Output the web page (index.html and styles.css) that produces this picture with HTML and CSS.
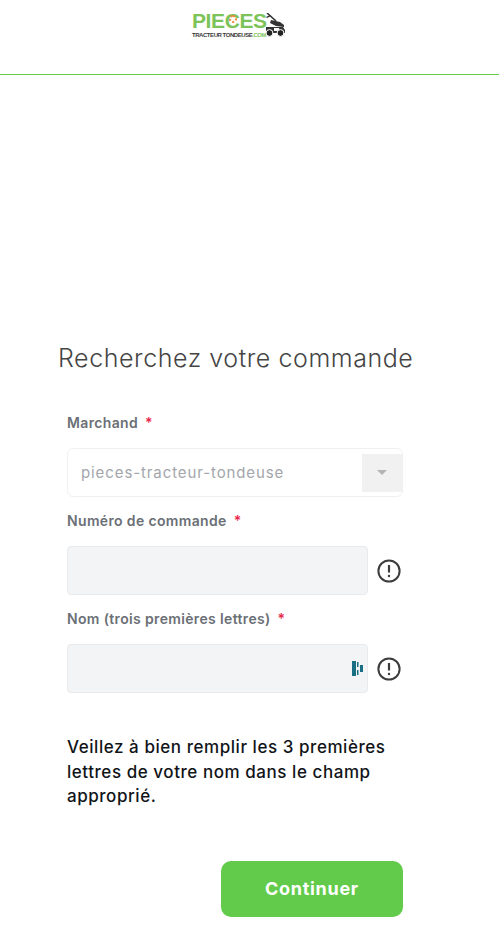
FILE: index.html
```html
<!DOCTYPE html>
<html lang="fr">
<head>
<meta charset="utf-8">
<title>Recherchez votre commande</title>
<link rel="stylesheet" href="styles.css">
</head>
<body>
<header class="header">
  <div class="logo">
    <div class="logo-text">
      <div class="logo-main">PIE<span class="logo-c">C<span class="logo-gear"></span></span>ES</div>
      <div class="logo-sub">TRACTEUR TONDEUSE<span class="logo-com">.COM</span></div>
    </div>
    <svg class="logo-mower" width="20" height="24" viewBox="0 0 20 24" aria-hidden="true">
      <path d="M2 0l9 8" stroke="#333" stroke-width="1.6" fill="none"/>
      <path d="M1 4l4-2 1 1-4 2z" fill="#333"/>
      <path d="M6 7l9 2 4 3v2l-8-1-6-3z" fill="#333"/>
      <path d="M1 14h17l2 3v3H1z" fill="#333"/>
      <path d="M9 15h5l1 3H9z" fill="#fff"/>
      <circle cx="4.5" cy="20" r="3.4" fill="#222" stroke="#fff"/>
      <circle cx="15.5" cy="20" r="3.4" fill="#222" stroke="#fff"/>
    </svg>
  </div>
</header>
<main class="main">
  <h1 class="title">Recherchez votre commande</h1>
  <form class="form">
    <div class="field">
      <label class="label">Marchand <span class="req">*</span></label>
      <div class="select">
        <span class="select-value">pieces-tracteur-tondeuse</span>
        <span class="select-arrow"><span class="caret"></span></span>
      </div>
    </div>
    <div class="field">
      <label class="label">Numéro de commande <span class="req">*</span></label>
      <div class="input-row">
        <div class="input"></div>
        <svg class="info" width="24" height="24" viewBox="0 0 24 24" aria-hidden="true">
          <circle cx="12" cy="12" r="10.6" fill="none" stroke="#3c3c3c" stroke-width="2"/>
          <path d="M12 6v7.5" stroke="#3c3c3c" stroke-width="2.2"/>
          <circle cx="12" cy="17" r="1.2" fill="#3c3c3c"/>
        </svg>
      </div>
    </div>
    <div class="field">
      <label class="label">Nom (trois premières lettres) <span class="req">*</span></label>
      <div class="input-row">
        <div class="input">
          <svg class="dash" width="11" height="15" viewBox="0 0 11 15" aria-hidden="true">
            <path d="M0 0h4v15H0z" fill="#1a6f85"/>
            <path d="M5 1h1.5v5H5zM5 9h1.5v5H5z" fill="#1a6f85"/>
            <path d="M8 4h3v7H8z" fill="#1a6f85"/>
          </svg>
        </div>
        <svg class="info" width="24" height="24" viewBox="0 0 24 24" aria-hidden="true">
          <circle cx="12" cy="12" r="10.6" fill="none" stroke="#3c3c3c" stroke-width="2"/>
          <path d="M12 6v7.5" stroke="#3c3c3c" stroke-width="2.2"/>
          <circle cx="12" cy="17" r="1.2" fill="#3c3c3c"/>
        </svg>
      </div>
    </div>
    <p class="note">Veillez à bien remplir les 3 premières lettres de votre nom dans le champ approprié.</p>
    <div class="actions">
      <button class="btn" type="button">Continuer</button>
    </div>
  </form>
</main>
</body>
</html>
```
FILE: styles.css
```css
* { box-sizing: border-box; }
html, body { margin: 0; padding: 0; }
body {
  background: #fff;
  font-family: "Inter", "Noto Sans", sans-serif;
  color: #3c3c3c;
  height: 944px;
  overflow: hidden;
}
.header {
  height: 75px;
  border-bottom: 1px solid #62cb4b;
  display: flex;
  justify-content: center;
  padding: 12px 0 0 0;
}
.logo { display: flex; align-items: flex-start; height: 26px; margin-left: -22px; }
.logo-text { display: flex; flex-direction: column; width: 75px; }
.logo-main {
  font-family: "Liberation Sans", sans-serif;
  font-weight: 700;
  font-size: 21px;
  line-height: 17px;
  letter-spacing: -0.4px;
  color: #7cc35a;
  white-space: nowrap;
}
.logo-c { position: relative; }
.logo-gear {
  position: absolute;
  left: 4px;
  top: 6px;
  width: 8px;
  height: 8px;
  border: 2px dotted #ee8a3c;
  border-radius: 50%;
}
.logo-sub {
  font-family: "Liberation Sans", sans-serif;
  font-weight: 700;
  font-size: 6px;
  line-height: 7px;
  letter-spacing: -0.45px;
  margin-top: 3px;
  color: #3b3b3b;
  white-space: nowrap;
}
.logo-com { color: #7cc35a; }
.logo-mower { margin: 1px 0 0 -2px; }
.main { padding: 0 0 0 58px; }
.title {
  margin: 268px 0 0 0;
  font-weight: 300;
  font-size: 25px;
  line-height: 30px;
  letter-spacing: 0.56px;
  color: #454545;
  white-space: nowrap;
}
.form { width: 345px; padding-left: 9px; margin-top: 40px; }
.field { height: 98px; }
.label {
  display: block;
  font-size: 14px;
  font-weight: 600;
  line-height: 20px;
  letter-spacing: 0.35px;
  color: #6b6f76;
  height: 35px;
}
.req { color: #e8274b; margin-left: 3px; }
.select {
  width: 336px;
  height: 49px;
  border: 1px solid #eff0f1;
  border-radius: 6px;
  display: flex;
  align-items: center;
  justify-content: space-between;
  padding-left: 13px;
}
.select-value { font-size: 15px; color: #a3a6ab; letter-spacing: 0.9px; }
.select-arrow {
  width: 40px;
  height: 38px;
  background: #f1f1f1;
  display: flex;
  align-items: center;
  justify-content: center;
}
.caret {
  width: 0;
  height: 0;
  border-left: 5px solid transparent;
  border-right: 5px solid transparent;
  border-top: 5px solid #b4b4b4;
}
.input-row { display: flex; align-items: center; gap: 9px; }
.input {
  width: 301px;
  height: 49px;
  background: #f3f4f6;
  border: 1px solid #e9eaec;
  border-radius: 4px;
  display: flex;
  align-items: center;
  justify-content: flex-end;
  padding-right: 4px;
}
.note {
  margin: 0;
  padding-top: 28px;
  font-size: 17px;
  font-weight: 500;
  line-height: 24.5px;
  letter-spacing: 0.55px;
  color: #111418;
  width: 336px;
}
.actions { display: flex; justify-content: flex-end; width: 336px; margin-top: 52px; }
.btn {
  width: 182px;
  height: 56px;
  border: 0;
  border-radius: 10px;
  background: #62cb4b;
  color: #fff;
  font-family: inherit;
  font-size: 18px;
  font-weight: 700;
  letter-spacing: 0.7px;
}
```
